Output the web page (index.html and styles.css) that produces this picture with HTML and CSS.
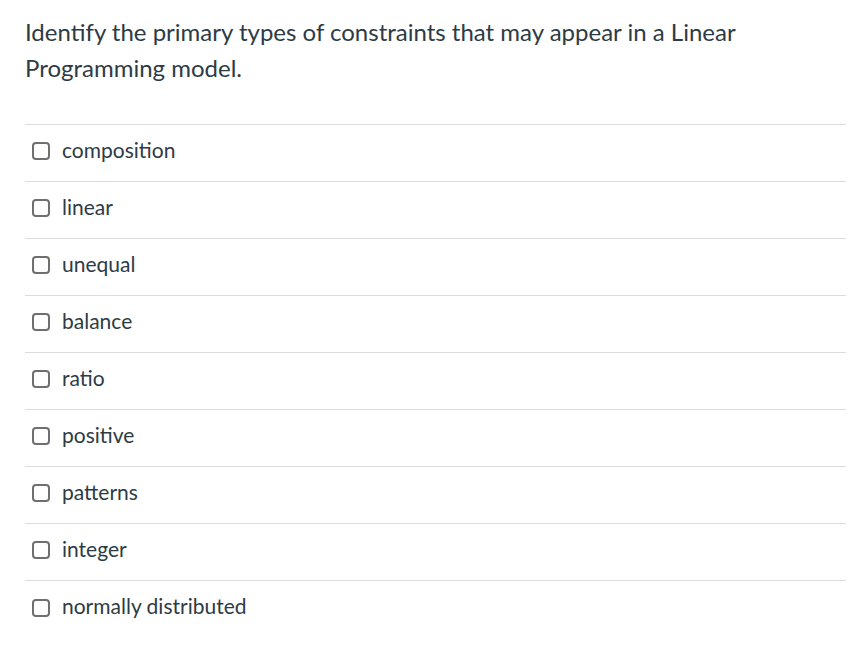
FILE: index.html
```html
<!DOCTYPE html>
<html>
<head>
<meta charset="utf-8">
<link rel="stylesheet" href="styles.css">
</head>
<body>
<div class="question">
  <div class="prompt">Identify the primary types of constraints that may appear in a Linear Programming model.</div>
  <ul class="answers">
    <li class="answer"><span class="box"></span><span class="label">composition</span></li>
    <li class="answer"><span class="box"></span><span class="label">linear</span></li>
    <li class="answer"><span class="box"></span><span class="label">unequal</span></li>
    <li class="answer"><span class="box"></span><span class="label">balance</span></li>
    <li class="answer"><span class="box"></span><span class="label">ratio</span></li>
    <li class="answer"><span class="box"></span><span class="label">positive</span></li>
    <li class="answer"><span class="box"></span><span class="label">patterns</span></li>
    <li class="answer"><span class="box"></span><span class="label">integer</span></li>
    <li class="answer last"><span class="box"></span><span class="label">normally distributed</span></li>
  </ul>
</div>
</body>
</html>
```

FILE: styles.css
```css
html, body {
  margin: 0;
  padding: 0;
  background: #ffffff;
}
body {
  font-family: Lato, "Liberation Sans", sans-serif;
  color: #2d3b45;
}
.question {
  width: 821px;
  padding: 0 15px 0 25px;
}
.prompt {
  font-size: 24px;
  line-height: 36px;
  padding-top: 14px;
  padding-bottom: 38px;
  width: 760px;
}
.answers {
  list-style: none;
  margin: 0;
  padding: 0;
  border-top: 1px solid #dcdcdc;
}
.answer {
  display: flex;
  align-items: center;
  box-sizing: border-box;
  height: 57px;
  border-bottom: 1px solid #dcdcdc;
  padding: 0 0 4px 7px;
}
.answer.last {
  border-bottom: none;
}
.box {
  box-sizing: border-box;
  width: 18px;
  height: 18px;
  border: 2px solid #6f6f6f;
  border-radius: 4px;
  margin-right: 12px;
  flex: none;
}
.label {
  font-size: 21px;
  padding-bottom: 4px;
}
```
